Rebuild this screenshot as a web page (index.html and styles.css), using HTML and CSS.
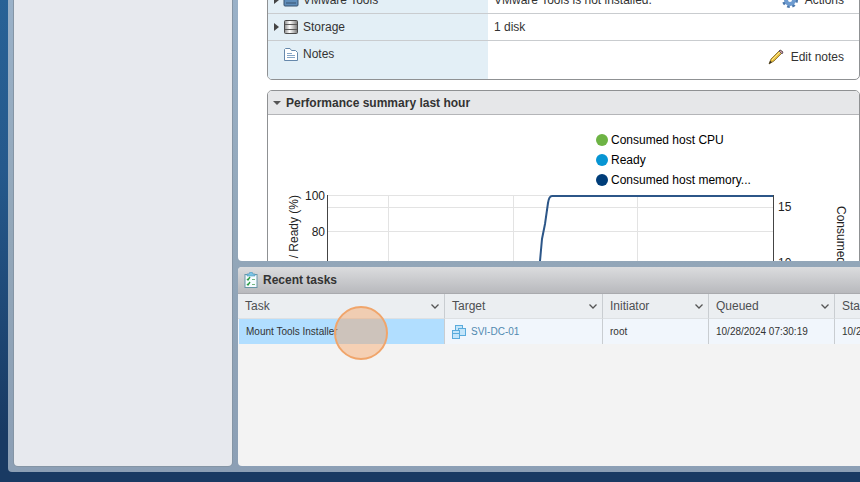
FILE: index.html
```html
<!DOCTYPE html>
<html lang="en">

<head>
    <meta charset="UTF-8">
    <meta name="viewport" content="width=device-width, initial-scale=1.0">
    <title>Virtual machine</title>
    <link rel="stylesheet" href="styles.css">
</head>

<body>
    <div class="shell">
        <aside class="navigator"></aside>
        <main class="workspace">
            <div class="details">
                <section class="panel config">
                    <div class="config-row">
                        <div class="config-name">
                            <svg class="arrow" viewBox="0 0 5 8"><path d="M0 0l5 4-5 4z" /></svg>
                            <svg class="icon" viewBox="0 0 16 16">
                                <rect x="1" y="3" width="14" height="11" rx="1" fill="#5f8dba" stroke="#39536e" />
                                <path d="M3 11h10" stroke="#39536e" />
                            </svg>
                            VMware Tools
                        </div>
                        <div class="config-value">
                            VMware Tools is not installed.
                            <button type="button" class="action">
                                <svg class="icon" viewBox="0 0 16 16">
                                    <circle cx="8" cy="8" r="6" fill="none" stroke="#4b77ab" stroke-width="4" stroke-dasharray="2.4 2.3" />
                                    <circle cx="8" cy="8" r="4" fill="none" stroke="#6d9bd0" stroke-width="4" />
                                </svg>
                                Actions
                            </button>
                        </div>
                    </div>
                    <div class="config-row">
                        <div class="config-name">
                            <svg class="arrow" viewBox="0 0 5 8"><path d="M0 0l5 4-5 4z" /></svg>
                            <svg class="icon" viewBox="0 0 16 16">
                                <defs>
                                    <linearGradient id="disk">
                                        <stop offset="0" stop-color="#8b8b8b" />
                                        <stop offset=".4" stop-color="#fff" />
                                        <stop offset="1" stop-color="#777" />
                                    </linearGradient>
                                </defs>
                                <rect x="1.5" y="1.5" width="13" height="13" rx="1" fill="url(#disk)" stroke="#4a4a4a" />
                                <path d="M2 5.5h12M2 10.5h12" stroke="#5a5a5a" />
                            </svg>
                            Storage
                        </div>
                        <div class="config-value">1 disk</div>
                    </div>
                    <div class="config-row">
                        <div class="config-name">
                            <span class="arrow"></span>
                            <svg class="icon" viewBox="0 0 16 16">
                                <path d="M1.500 14.500v-11l1-1H7l1.500 2h4l2 2v8z" fill="#fff" stroke="#6688ab" />
                                <path d="M4 7.500h5M4 9.500h8M4 11.500h8" stroke="#86a6c6" />
                            </svg>
                            Notes
                        </div>
                        <div class="config-value">
                            <button type="button" class="action">
                                <svg class="icon" viewBox="0 0 16 16">
                                    <path d="M1 15l2-5 9-9 3 2-9 9z" fill="#e8bf3d" stroke="#7a6228" stroke-width=".8" />
                                    <path d="M4 11l8-8" stroke="#fbe99a" />
                                    <path d="M11 2l1-1 3 2-1 2z" fill="#d9a3a3" stroke="#66596a" />
                                    <path d="M1 15l1-3 2 1z" fill="#222" />
                                </svg>
                                Edit notes
                            </button>
                        </div>
                    </div>
                </section>

                <section class="panel performance">
                    <h2 class="panel-title">
                        <svg class="arrow-down" viewBox="0 0 8 4"><path d="M0 0h8L4 4z" /></svg>
                        Performance summary last hour
                    </h2>
                    <ul class="legend">
                        <li class="cpu">Consumed host CPU</li>
                        <li class="ready">Ready</li>
                        <li class="memory">Consumed host memory...</li>
                    </ul>
                    <svg class="chart" width="591" height="160" viewBox="0 0 591 160">
                        <path class="grid" d="M59 5.500H505M59 17.500H505M59 41.500H505M120.500 5V160M245.500 5V160M369.500 5V160" />
                        <path class="axis" d="M59.500 5V160M505.500 5V160" />
                        <path class="memory-line" d="M272 71L274 49L277 34L280 13Q281 6 284 6H505" />
                        <text x="57" y="10" text-anchor="end">100</text>
                        <text x="57" y="46" text-anchor="end">80</text>
                        <text x="510" y="21">15</text>
                        <text x="510" y="77">10</text>
                        <text transform="translate(30 5) rotate(-90)" text-anchor="end">/ Ready (%)</text>
                        <text transform="translate(569 16) rotate(90)">Consumed host memory</text>
                    </svg>
                </section>
            </div>

            <section class="tasks">
                <h2 class="tasks-title">
                    <svg class="icon" viewBox="0 0 16 16">
                        <rect x="2" y="2.500" width="12" height="13" fill="#f6fcff" stroke="#6796a8" />
                        <path d="M4 4V2h2l1-2h2l1 2h2v2z" fill="#7cc5e6" stroke="#4b91b4" stroke-width=".6" />
                        <path d="M4 7l1 1 2-3M4 12l1 1 2-3" fill="none" stroke="#2d9c45" stroke-width="1.400" />
                        <path d="M9 7.500h3M9 12.500h3" stroke="#73b781" />
                    </svg>
                    Recent tasks
                </h2>
                <table class="task-table">
                    <colgroup>
                        <col class="col-task">
                        <col class="col-target">
                        <col class="col-initiator">
                        <col class="col-queued">
                        <col class="col-started">
                    </colgroup>
                    <thead>
                        <tr>
                            <th>Task <svg class="chevron" viewBox="0 0 8 5"><path d="M.5 .5L4 4 7.500 .5" /></svg></th>
                            <th>Target <svg class="chevron" viewBox="0 0 8 5"><path d="M.5 .5L4 4 7.500 .5" /></svg></th>
                            <th>Initiator <svg class="chevron" viewBox="0 0 8 5"><path d="M.5 .5L4 4 7.500 .5" /></svg></th>
                            <th>Queued <svg class="chevron" viewBox="0 0 8 5"><path d="M.5 .5L4 4 7.500 .5" /></svg></th>
                            <th>Started</th>
                        </tr>
                    </thead>
                    <tbody>
                        <tr>
                            <td class="selected">Mount Tools Installer<span class="click-mark"></span></td>
                            <td>
                                <a href="#" class="vm-link">
                                    <svg class="vm-icon" viewBox="0 0 14 14">
                                        <g fill="#c3e5fa" stroke="#5aabdc">
                                            <rect x="3.500" y=".5" width="7" height="7" />
                                            <rect x="6.500" y="3.500" width="7" height="7" />
                                            <rect x=".5" y="5.500" width="7" height="8" />
                                        </g>
                                        <path d="M1 8.500h6" stroke="#5aabdc" />
                                    </svg>
                                    SVI-DC-01
                                </a>
                            </td>
                            <td>root</td>
                            <td>10/28/2024 07:30:19</td>
                            <td>10/28/2024 07:30:19</td>
                        </tr>
                    </tbody>
                </table>
            </section>
        </main>
    </div>
</body>

</html>
```
FILE: styles.css
```css
*,
*::before,
*::after {
    box-sizing: border-box;
}

body {
    margin: 0;
    height: 100vh;
    padding: 0 0 10px 8px;
    overflow: hidden;
    background: linear-gradient(#286296, #25598c 35%, #193a63 90%);
    color: #333;
    font-family: "Liberation Sans", Arial, sans-serif;
    font-size: 12px;
    line-height: 16px;
}

h2,
ul {
    margin: 0;
    padding: 0;
}

.shell {
    display: flex;
    gap: 6px;
    height: 100%;
    padding: 0 0 6px 6px;
    border-radius: 0 0 0 4px;
    background: linear-gradient(#9ab1c8, #93a7b9 50%, #8c9fb5);
}

.navigator {
    flex: 0 0 218px;
    border-radius: 0 0 4px 4px;
    background: #e7e9ee;
    box-shadow: 0 0 0 1px #8595a5;
}

.workspace {
    flex: 1;
    min-width: 0;
    display: grid;
    grid-template-rows: 1fr 199px;
    gap: 6px;
}

.details {
    min-height: 0;
    overflow: hidden;
    padding-left: 29px;
    border-radius: 0 0 0 4px;
    background: #fff;
}

.panel {
    border: 1px solid #8f9193;
    border-radius: 5px;
    overflow: hidden;
    background: #fff;
}

.config {
    margin-top: -14px;
}

.config-row {
    display: grid;
    grid-template-columns: 220px 1fr;
    height: 27px;
    border-bottom: 1px solid #c9cccf;
}

.config-row:last-child {
    height: 38px;
    border-bottom: 0;
}

.config-name,
.config-value {
    display: flex;
    padding: 5px 15px 0 6px;
}

.config-name {
    gap: 4px;
    background: #e3eff6;
}

.icon {
    flex: none;
    width: 16px;
    height: 16px;
}

.arrow {
    flex: none;
    width: 5px;
    height: 8px;
    margin-top: 4px;
    fill: #444;
}

.action {
    display: flex;
    gap: 7px;
    height: 16px;
    margin-left: auto;
    padding: 0;
    border: 0;
    background: none;
    color: inherit;
    font: inherit;
}

.config-row:last-child .action {
    margin-top: 3px;
}

.performance {
    margin-top: 10px;
}

.panel-title {
    display: flex;
    align-items: center;
    gap: 5px;
    height: 24px;
    padding-left: 5px;
    border-bottom: 1px solid #b4b5b8;
    background: #e6e7e9;
    font-size: 12px;
}

.arrow-down {
    width: 8px;
    height: 4px;
    fill: #555;
}

.legend {
    padding: 15px 0 0 328px;
    color: #000;
    line-height: 20px;
    list-style: none;
}

.legend li {
    display: flex;
    align-items: center;
    gap: 3px;
}

.legend li::before {
    content: "";
    width: 12px;
    height: 12px;
    border-radius: 50%;
    background: currentColor;
}

.legend .cpu::before {
    background: #6db344;
}

.legend .ready::before {
    background: #0795d3;
}

.legend .memory::before {
    background: #003d79;
}

.chart {
    display: block;
    fill: #222;
    font-size: 12px;
}

.grid {
    stroke: #e3e3e3;
}

.axis {
    stroke: #444;
}

.memory-line {
    fill: none;
    stroke: #2c5688;
    stroke-width: 2;
}

.tasks {
    min-width: 0;
    overflow: hidden;
    border-radius: 4px 0 0 4px;
    background: #f3f3f3;
}

.tasks-title {
    display: flex;
    align-items: center;
    gap: 4px;
    height: 27px;
    padding-left: 5px;
    border-bottom: 1px solid #a9aaae;
    background: linear-gradient(#dbdcde, #b8b9bd);
    font-size: 12px;
}

.task-table {
    width: 746px;
    table-layout: fixed;
    border-collapse: separate;
    border-spacing: 0;
}

.col-task {
    width: 207px;
}

.col-target {
    width: 158px;
}

.col-initiator {
    width: 106px;
}

.col-queued {
    width: 126px;
}

.task-table th,
.task-table td {
    height: 25px;
    padding: 0 5px 0 7px;
    border-right: 1px solid #c9cdd1;
    text-align: left;
}

.task-table th {
    border-bottom: 1px solid #dde0e3;
    background: #ebeef1;
    color: #4d4f52;
    font-weight: 400;
}

.task-table td {
    position: relative;
    background: #f1f6fc;
    font-size: 10px;
}

.task-table .selected {
    border-left: 1px solid #f1f6fc;
    background: #b1deff;
}

.chevron {
    float: right;
    width: 8px;
    height: 5px;
    margin-top: 6px;
    fill: none;
    stroke: #555;
    stroke-width: 1.3;
}

.vm-link {
    display: flex;
    align-items: center;
    gap: 5px;
    color: #5089b0;
    text-decoration: none;
}

.vm-icon {
    width: 14px;
    height: 14px;
}

/* highlights the last click */
.click-mark {
    position: absolute;
    top: -13px;
    left: 95px;
    width: 54px;
    height: 54px;
    border: 2px solid #f0a56b;
    border-radius: 50%;
    background: rgba(247, 156, 84, .4);
}
```
